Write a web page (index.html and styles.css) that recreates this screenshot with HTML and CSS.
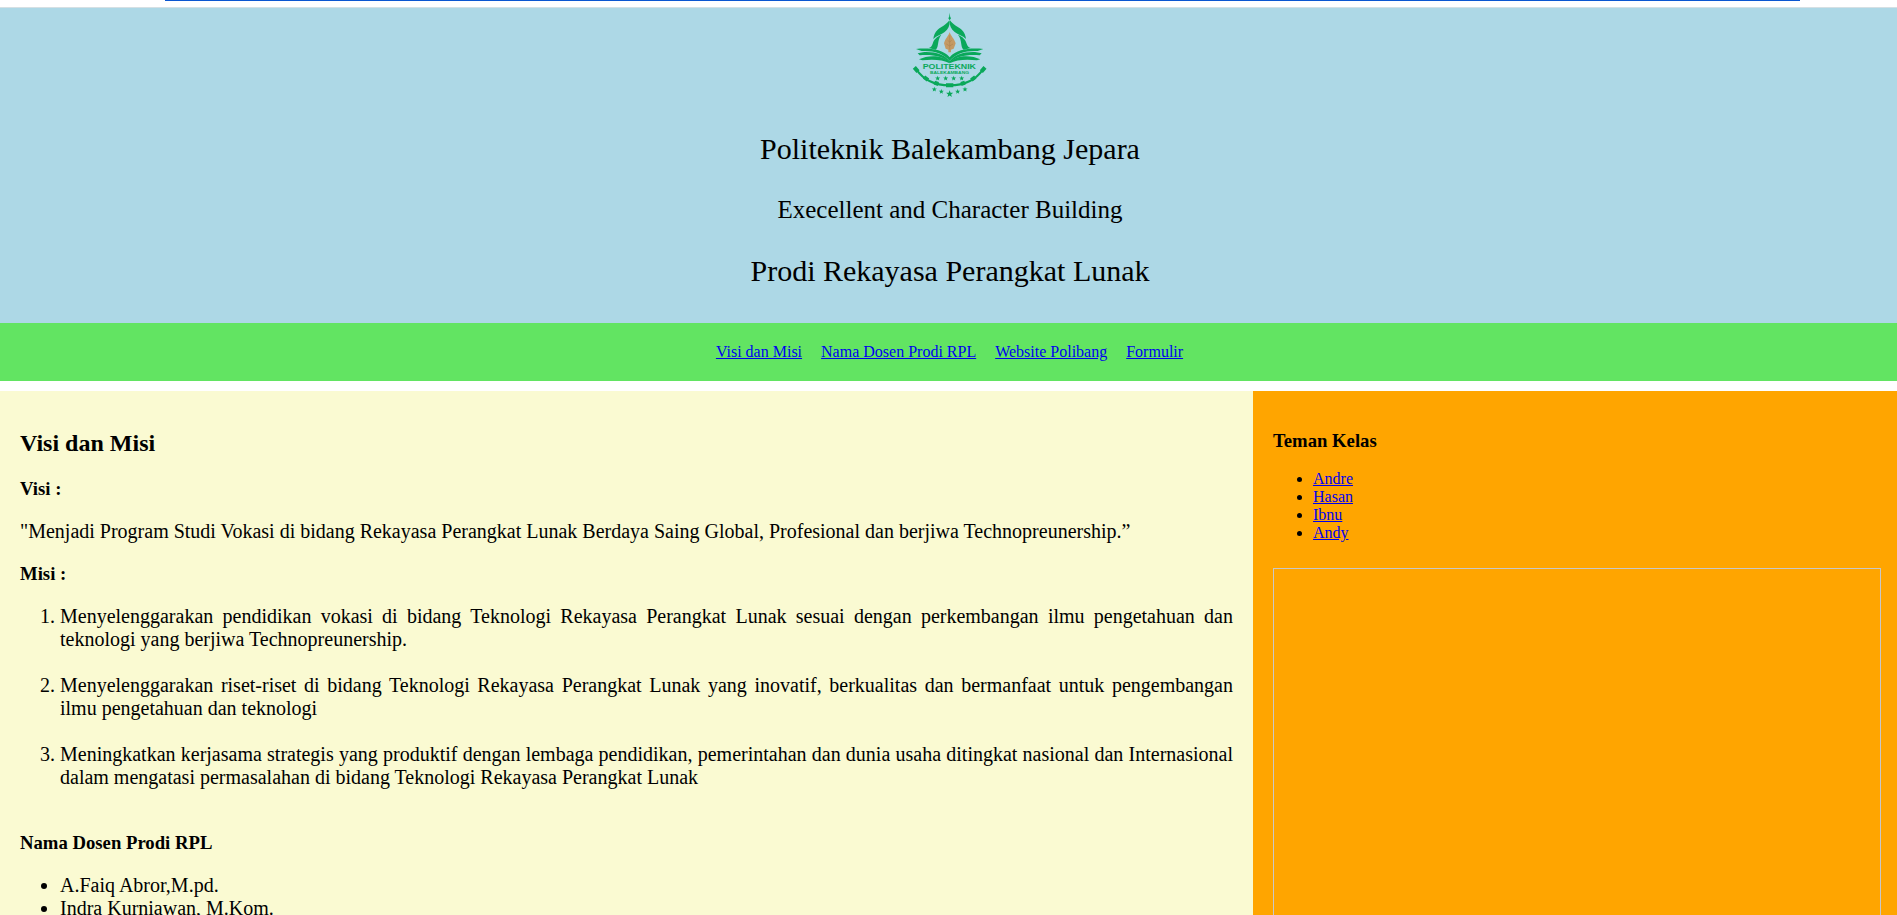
FILE: index.html
```html
<!DOCTYPE html>
<html lang="id">
<head>
<meta charset="utf-8">
<title>Politeknik Balekambang Jepara</title>
<link rel="stylesheet" href="styles.css">
</head>
<body>
<div class="topbar"><div class="topbar-line"></div></div>
<header class="header">
  <svg class="logo" viewBox="36 36 228 264" fill="none" stroke="#0aa85a">
    <defs>
      <path id="star" fill="#0aa85a" stroke="none" d="M0-8 2-2.750 7.600-2.500 3.200 1.050 4.700 6.500 0 3.400-4.700 6.500-3.200 1.050-7.600-2.500-2-2.750Z"/>
    </defs>
    <g fill="#0aa85a" stroke="none">
      <path d="M149 38 150.500 50 153 55 149 61 145 55 147.500 50Z"/>
      <path d="M148 61C140 74 124 80 113 89 105 96 101 106 100 117 110 107 124 104 134 96 145 87 149 77 149 65Z"/>
      <path d="M150 61C158 74 174 80 185 89 193 96 197 106 198 117 188 107 174 104 164 96 153 87 149 77 149 65Z"/>
      <path d="M124 104C111 110 101 118 98 131 95 139 92 142 86 144L107 149C118 139 110 123 124 104Z"/>
      <path d="M174 104C187 110 197 118 200 131 203 139 206 142 212 144L191 149C180 139 188 123 174 104Z"/>
      <path d="M48 147C83 144 126 145 149 172 172 145 215 144 250 147L233 153C201 151 168 158 149 183 130 158 97 151 65 153Z"/>
      <path d="M53 160 73 156C108 155 133 163 149 184 165 163 190 155 225 156L245 160 239 166C208 163 169 166 149 189 129 166 90 163 59 166Z"/>
      <path d="M57 178 77 171C111 165 137 172 149 189 161 172 187 165 221 171L241 178 231 181C200 177 169 179 149 190 129 179 98 177 67 181Z"/>
    </g>
    <path fill="#c49a64" stroke="none" d="M149 96C147 106 135 116 132 130L137 146 145 149 145 157H153L153 149 161 146 167 130C163 116 151 106 149 96Z"/>
    <path stroke="#a67f4c" stroke-width="1.500" d="M149 106V149M143 121 149 126 155 121M139 132 149 138 159 132"/>
    <path stroke-width="6" d="M49 208C70 239 107 256 149 256S228 239 249 208"/>
    <path stroke-width="12" d="M43 202 54 215M255 202 244 215M72 231 84 240M226 231 214 240M103 248 115 252M195 248 183 252M138 256H160"/>
    <g class="logo-text">
      <text class="logo-name" x="68" y="206" textLength="160" lengthAdjust="spacingAndGlyphs">POLITEKNIK</text>
      <text class="logo-sub" x="90" y="221" textLength="117" lengthAdjust="spacingAndGlyphs">BALEKAMBANG</text>
    </g>
    <use href="#star" x="113" y="235"/><use href="#star" x="137" y="235"/><use href="#star" x="161" y="235"/><use href="#star" x="185" y="235"/>
    <use href="#star" x="103" y="268"/><use href="#star" x="124" y="275"/><use href="#star" transform="translate(149 282) scale(1.400)"/><use href="#star" x="173" y="275"/><use href="#star" x="195" y="268"/>
  </svg>
  <p class="title">Politeknik Balekambang Jepara</p>
  <p class="motto">Execellent and Character Building</p>
  <p class="title">Prodi Rekayasa Perangkat Lunak</p>
</header>
<nav class="nav">
  <a href="#visi">Visi dan Misi</a>
  <a href="#dosen">Nama Dosen Prodi RPL</a>
  <a href="#web">Website Polibang</a>
  <a href="#form">Formulir</a>
</nav>
<div class="columns">
  <main class="content">
    <h2 id="visi">Visi dan Misi</h2>
    <h3>Visi :</h3>
    <p>"Menjadi Program Studi Vokasi di bidang Rekayasa Perangkat Lunak Berdaya Saing Global, Profesional dan berjiwa Technopreunership.”</p>
    <h3>Misi :</h3>
    <ol class="missions">
      <li>Menyelenggarakan pendidikan vokasi di bidang Teknologi Rekayasa Perangkat Lunak sesuai dengan perkembangan ilmu pengetahuan dan teknologi yang berjiwa Technopreunership.</li>
      <li>Menyelenggarakan riset-riset di bidang Teknologi Rekayasa Perangkat Lunak yang inovatif, berkualitas dan bermanfaat untuk pengembangan ilmu pengetahuan dan teknologi</li>
      <li>Meningkatkan kerjasama strategis yang produktif dengan lembaga pendidikan, pemerintahan dan dunia usaha ditingkat nasional dan Internasional dalam mengatasi permasalahan di bidang Teknologi Rekayasa Perangkat Lunak</li>
    </ol>
    <h3 id="dosen">Nama Dosen Prodi RPL</h3>
    <ul class="lecturers">
      <li>A.Faiq Abror,M.pd.</li>
      <li>Indra Kurniawan, M.Kom.</li>
    </ul>
  </main>
  <aside class="sidebar">
    <h3>Teman Kelas</h3>
    <ul class="friends">
      <li><a href="#andre">Andre</a></li>
      <li><a href="#hasan">Hasan</a></li>
      <li><a href="#ibnu">Ibnu</a></li>
      <li><a href="#andy">Andy</a></li>
    </ul>
    <div class="frame"></div>
  </aside>
</div>
</body>
</html>
```

FILE: styles.css
```css
* { box-sizing: border-box; }
html { height: 915px; overflow: hidden; }
body {
  margin: 0;
  height: 915px;
  overflow: hidden;
  display: flex;
  flex-direction: column;
  background: #fff;
  color: #000;
  font-family: "Liberation Serif", "Times New Roman", serif;
  font-size: 16px;
}
a { color: #00e; text-decoration: underline; }
.topbar {
  flex: none;
  height: 8px;
  padding: 0 97px 0 165px;
  border-bottom: 1px solid #d5e0e4;
}
.topbar-line { height: 1px; background: #0b57d0; }
.header {
  flex: none;
  height: 315px;
  padding: 4px 0 0 3px;
  background: #add8e6;
  display: flex;
  flex-direction: column;
  align-items: center;
}
.logo { flex: none; width: 76px; height: 88px; }
.logo-text { fill: #0aa85a; stroke: none; font-family: "Liberation Sans", Arial, sans-serif; font-weight: bold; }
.logo-name { font-size: 20px; }
.logo-sub { font-size: 11px; }
.title, .motto { margin: 0; text-align: center; }
.title { font-size: 30px; line-height: 34px; margin-top: 32px; }
.motto { font-size: 25px; line-height: 28px; margin-top: 30px; }
.motto + .title { margin-top: 30px; }
.nav {
  flex: none;
  height: 58px;
  padding: 20px 19px 20px 21px;
  background: #62e462;
  display: flex;
  justify-content: center;
  gap: 19px;
  line-height: 18px;
}
.columns { flex: 1; min-height: 0; margin-top: 10px; display: flex; overflow: hidden; }
.content {
  width: 1253px;
  padding: 20px;
  background: #fafad2;
  font-size: 20px;
  line-height: 23px;
}
.content h2 { margin: 19px 0 21px; font-size: 24px; line-height: 27px; }
.content h3 { margin: 0 0 20px; font-size: 18.72px; line-height: 22px; }
.content p { margin: 0 0 20px; }
.missions, .lecturers { margin: 0; padding-left: 40px; text-align: justify; }
.missions li { margin-bottom: 23px; }
.missions { margin-bottom: 43px; }
.sidebar { flex: 1; padding: 20px 16px 0 20px; background: orange; }
.sidebar h3 { margin: 19px 0; font-size: 18.72px; line-height: 21px; }
.friends { margin: 0 0 26px; padding-left: 40px; line-height: 18px; }
.frame { height: 450px; border: 1px solid #c8c8c8; }
```
